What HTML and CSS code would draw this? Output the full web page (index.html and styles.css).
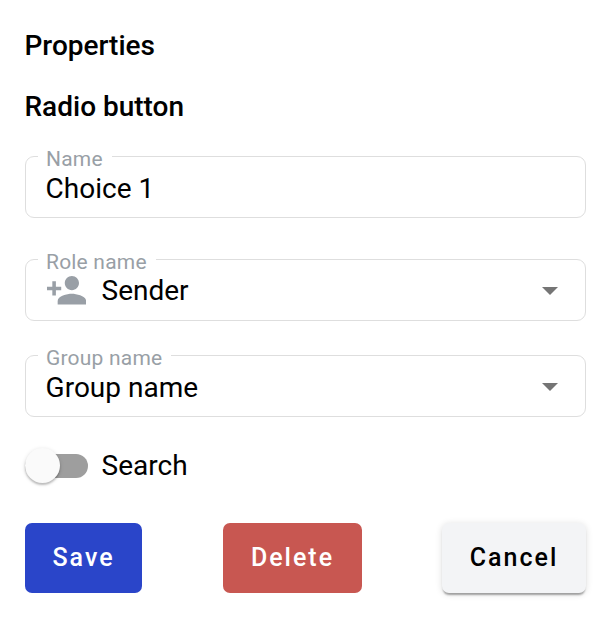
FILE: index.html
```html
<!DOCTYPE html>
<html lang="en">
<head>
<meta charset="utf-8">
<title>Properties</title>
<link rel="stylesheet" href="styles.css">
</head>
<body>
<main class="panel">
  <h1 class="title">Properties</h1>
  <h2 class="title subtitle">Radio button</h2>
  <fieldset class="field name">
    <legend>Name</legend>
    <div class="value"><span>Choice 1</span></div>
  </fieldset>
  <fieldset class="field role">
    <legend>Role name</legend>
    <div class="value">
      <svg class="person" viewBox="0.44 3.44 22.5 16.87"><path d="M15 12c2.210 0 4-1.790 4-4s-1.790-4-4-4-4 1.790-4 4 1.790 4 4 4zm-9-2V7H4v3H1v2h3v3h2v-3h3v-2H6zm9 4c-2.670 0-8 1.340-8 4v2h16v-2c0-2.660-5.330-4-8-4z"/></svg>
      <span>Sender</span>
      <svg class="arrow" viewBox="0 0 16 8"><path d="M0 0h16l-8 8z"/></svg>
    </div>
  </fieldset>
  <fieldset class="field group">
    <legend>Group name</legend>
    <div class="value"><span>Group name</span>
      <svg class="arrow" viewBox="0 0 16 8"><path d="M0 0h16l-8 8z"/></svg>
    </div>
  </fieldset>
  <label class="toggle"><span class="track"><span class="thumb"></span></span><span>Search</span></label>
  <div class="actions">
    <button class="save">Save</button>
    <button class="delete">Delete</button>
    <button class="cancel">Cancel</button>
  </div>
</main>
</body>
</html>
```
FILE: styles.css
```css
* { box-sizing: border-box; }
body { margin: 0; background: #fff; color: #000; font: 28px/32px Roboto, sans-serif; }
.panel { padding: 30px 27px 30px 25px; display: flex; flex-direction: column; }
.title { margin: 0 0 0 -.5px; font-size: 28px; font-weight: 500; line-height: 32px; }
.subtitle { margin-top: 29px; }
.field { height: 71px; min-width: 0; margin: 0; padding: 6px 27px 0 12px; border: 1px solid #dedede; border-radius: 9px; }
.field legend { height: 18px; padding: 0 9px 0 8px; font-size: 21px; line-height: 24px; color: #999fa6; letter-spacing: .2px; }
.name { margin-top: 24px; }
.role { margin-top: 32px; }
.group { margin-top: 25px; }
.value { display: flex; align-items: center; height: 36px; padding-left: 7.600px; }
.role .value { height: 34px; padding-left: 8px; }
.person { width: 40px; height: 30px; margin: 0 15.500px 2px 0; fill: #999fa6; }
.arrow { width: 16px; height: 8px; margin-left: auto; fill: #757575; }
.group .arrow { margin-bottom: 2px; }
.toggle { display: flex; align-items: center; gap: 13.600px; height: 36px; margin-top: 31px; }
.track { display: flex; align-items: center; width: 63px; height: 24px; border-radius: 12px; background: #9e9e9e; }
.thumb { width: 35px; height: 35px; margin-bottom: 1px; border-radius: 50%; background: #fafafa; box-shadow: 0 2px 2px #0003, 0 1px 4px #0002; }
.actions { display: flex; justify-content: space-between; margin-top: 39px; }
button { height: 70px; padding: 0; border: 0; border-radius: 7px; color: #fff; font: 500 25px/70px Roboto, sans-serif; letter-spacing: 2px; }
.save { width: 117px; background: #2a45c9; }
.delete { width: 139px; margin-left: 1px; background: #c85751; }
.cancel { width: 144px; background: #f3f4f6; color: #000; box-shadow: 0 3px 2px -1px #0005, 0 1px 7px #0002; }
```
